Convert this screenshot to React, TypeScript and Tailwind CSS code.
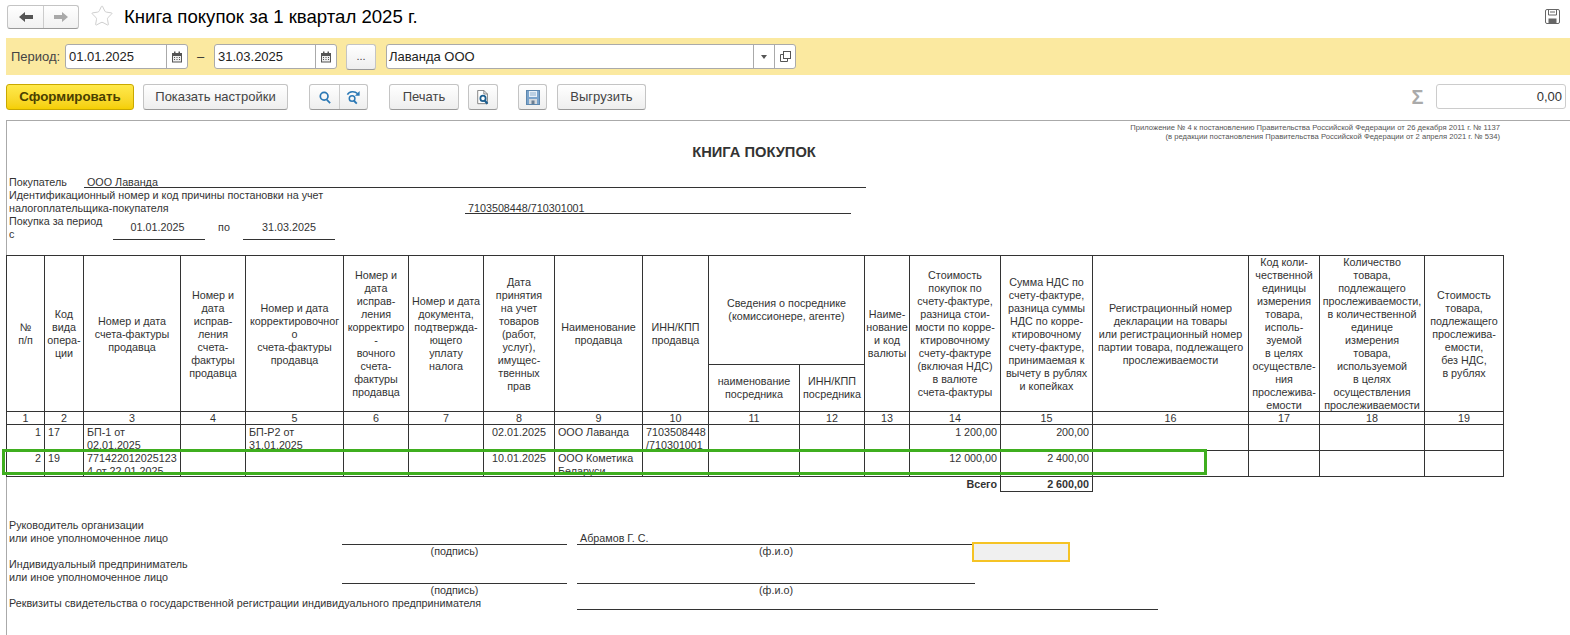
import type { ReactNode } from "react";
import { Star } from "lucide-react";

const colWidths = [38, 39, 97, 65, 98, 65, 75, 71, 88, 66, 91, 65, 45, 91, 92, 156, 71, 105, 79];

const rows = [
  ["1", "17", "БП-1 от\n02.01.2025", "", "БП-Р2 от\n31.01.2025", "", "", "02.01.2025", "ООО Лаванда", "7103508448\n/710301001", "", "", "", "1 200,00", "200,00", "", "", "", ""],
  ["2", "19", "771422012025123\n4 от 22.01.2025", "", "", "", "", "10.01.2025", "ООО Кометика\nБеларуси", "", "", "", "", "12 000,00", "2 400,00", "", "", "", ""],
];

const rightAligned = [0, 13, 14];
const centered = [7];

function Th({ lines, rowSpan, colSpan }: { lines: string[]; rowSpan?: number; colSpan?: number }) {
  return (
    <th rowSpan={rowSpan} colSpan={colSpan} className="overflow-hidden border border-[#333] p-0 text-center align-middle font-normal">
      <div className="mb-[-1px]">
        {lines.map((l, i) => (
          <div key={i} className="h-[13px] whitespace-nowrap">
            {l}
          </div>
        ))}
      </div>
    </th>
  );
}

function CalendarIcon() {
  return (
    <svg width="12" height="12" viewBox="0 0 12 12">
      <rect x="1" y="2" width="10" height="9.5" fill="#555" />
      <rect x="2" y="5" width="8" height="5.5" fill="#eee" />
      <rect x="3" y="0.5" width="1.5" height="2.5" fill="#555" />
      <rect x="7.5" y="0.5" width="1.5" height="2.5" fill="#555" />
      <path d="M3 6.5h1M5.5 6.5h1M8 6.5h1M3 8.5h1M5.5 8.5h1M8 8.5h1" stroke="#555" />
    </svg>
  );
}

function DateField({ value }: { value: string }) {
  return (
    <div className="flex h-[25px] w-[123px] items-center rounded-[3px] border border-[#aaa] bg-white">
      <span className="flex-1 pl-[3px] text-[13px] text-[#222]">{value}</span>
      <span className="flex h-full w-[21px] items-center justify-center border-l border-[#aaa]">
        <CalendarIcon />
      </span>
    </div>
  );
}

function Btn({ children, className }: { children: ReactNode; className: string }) {
  return (
    <div className={`flex h-[26px] items-center justify-center rounded-[3px] border border-[#c4c4c4] border-b-[#999] bg-gradient-to-b from-white to-[#eee] text-[13px] text-[#444] ${className}`}>
      {children}
    </div>
  );
}

function FloppyBlue() {
  return (
    <svg width="14" height="15" viewBox="0 0 14 15">
      <rect x="0.5" y="0.5" width="13" height="14" fill="#7ba4cc" stroke="#5c86ad" />
      <rect x="3" y="1" width="8" height="6" fill="#e8f0f7" />
      <path d="M4 3h6M4 5h6" stroke="#8fb0cf" />
      <rect x="3" y="9" width="8" height="5" fill="#d5d9dd" />
      <rect x="5.500" y="10.500" width="3" height="3.500" fill="#6b7f93" />
    </svg>
  );
}

export default function App() {
  return (
    <div className="h-[635px] w-[1570px] overflow-hidden bg-white font-['Liberation_Sans',sans-serif]">
      {/* шапка формы */}
      <div className="flex h-[38px] items-start pl-[7px] pt-[5px]">
        <div className="flex h-[24px] w-[72px] rounded-[3px] border border-[#c4c4c4] border-b-[#999] bg-gradient-to-b from-white to-[#f1f1f1]">
          <div className="flex w-[36px] items-center justify-center border-r border-[#ccc]">
            <svg width="14" height="10" viewBox="0 0 14 10">
              <path d="M0 5l6-5v3h8v4H6v3z" fill="#555" />
            </svg>
          </div>
          <div className="flex flex-1 items-center justify-center">
            <svg width="14" height="10" viewBox="0 0 14 10">
              <path d="M14 5L8 0v3H0v4h8v3z" fill="#a9a9a9" />
            </svg>
          </div>
        </div>
        <Star className="ml-[11px] mt-[-1px] text-[#cfcfcf]" size={24} strokeWidth={1} />
        <h1 className="ml-[10px] text-[18.6px] leading-[24px] text-black">Книга покупок за 1 квартал 2025 г.</h1>
        <div className="ml-auto mr-[10px] mt-[4px]">
          <svg width="15" height="15" viewBox="0 0 15 15" fill="none" stroke="#666">
            <rect x="0.5" y="0.5" width="14" height="14" rx="1.5" />
            <path d="M3.5 1v5h8V1M5 3h5" />
            <rect x="4" y="10" width="7" height="4.5" fill="#666" />
          </svg>
        </div>
      </div>

      {/* панель отбора */}
      <div className="ml-[6px] flex h-[37px] items-center bg-[#fbe9a0] pl-[5px] text-[13px] text-[#444]">
        <span className="w-[54px]">Период:</span>
        <DateField value="01.01.2025" />
        <span className="w-[26px] pl-[9px] text-[#333]">–</span>
        <DateField value="31.03.2025" />
        <div className="ml-[9px] flex h-[26px] w-[30px] items-center justify-center rounded-[3px] border border-[#c4c4c4] border-b-[#999] bg-gradient-to-b from-white to-[#eee] text-[11px] text-[#444]">...</div>
        <div className="ml-[10px] flex h-[25px] w-[410px] items-center rounded-[3px] border border-[#aaa] bg-white">
          <span className="flex-1 pl-[2px] text-[#222]">Лаванда ООО</span>
          <span className="flex h-full w-[21px] items-center justify-center border-l border-[#aaa]">
            <svg width="6" height="4" viewBox="0 0 6 4">
              <path d="M0 0h6L3 4z" fill="#555" />
            </svg>
          </span>
          <span className="flex h-full w-[21px] items-center justify-center border-l border-[#aaa]">
            <svg width="11" height="11" viewBox="0 0 11 11" fill="none" stroke="#555">
              <rect x="3.5" y="0.5" width="7" height="7" />
              <path d="M3 3.5H0.5v7h7V8" />
            </svg>
          </span>
        </div>
      </div>

      {/* командная панель */}
      <div className="flex h-[45px] items-start pl-[6px] pt-[9px]">
        <div className="flex h-[26px] w-[128px] items-center justify-center rounded-[3px] border border-[#c9a800] bg-gradient-to-b from-[#ffe94a] to-[#f5cf00] text-[13.3px] font-bold text-[#4a4000]">Сформировать</div>
        <Btn className="ml-[9px] w-[145px]">Показать настройки</Btn>
        <Btn className="ml-[21px] w-[59px] !justify-start">
          <span className="flex h-full w-[30px] items-center justify-center border-r border-[#ccc]">
            <svg width="12" height="13" viewBox="0 0 14 15" fill="none" stroke="#2b78b5" strokeWidth="2">
              <circle cx="6" cy="6" r="4.5" />
              <path d="M9 10l4 4" />
            </svg>
          </span>
          <span className="flex flex-1 items-center justify-center">
            <svg width="15" height="15" viewBox="0 0 15 16" fill="none" stroke="#2b78b5" strokeWidth="1.6">
              <path d="M1 5c2-4 8-4 11-1" />
              <path d="M14 1v5H9" fill="#2b78b5" stroke="none" />
              <circle cx="6" cy="9" r="3" />
              <path d="M8 11.500l3 3" strokeWidth="2" />
            </svg>
          </span>
        </Btn>
        <Btn className="ml-[21px] w-[70px]">Печать</Btn>
        <Btn className="ml-[9px] w-[30px]">
          <svg width="14" height="15" viewBox="0 0 15 17" fill="none">
            <path d="M1.500 0.500h7l4 4v11h-11z" stroke="#777" fill="#fff" />
            <path d="M8.500 0.500v4h4" stroke="#777" />
            <circle cx="7.500" cy="9.500" r="3" stroke="#1d5f8f" strokeWidth="2" />
            <path d="M9.500 12l3 3.500" stroke="#1d5f8f" strokeWidth="2.500" />
          </svg>
        </Btn>
        <Btn className="ml-[20px] w-[29px]">
          <FloppyBlue />
        </Btn>
        <Btn className="ml-[10px] w-[89px]">Выгрузить</Btn>
        <span className="ml-auto w-[21px] text-center text-[20px] font-bold leading-[26px] text-[#aaa]">Σ</span>
        <div className="ml-[8px] mr-[4px] flex h-[25px] w-[130px] items-center justify-end rounded-[3px] border border-[#ccc] pr-[3px] text-[13px] text-[#333]">0,00</div>
      </div>

      {/* табличный документ */}
      <div className="relative ml-[6px] h-[515px] border-l border-t border-[#aaa] text-[10.75px] leading-[13px] text-[#333]">
        <div className="w-[1493px] pt-[2px] text-right text-[7.64px] leading-[9px] text-[#555]">
          <div>Приложение № 4 к постановлению Правительства Российской Федерации от 26 декабря 2011 г. № 1137</div>
          <div>(в редакции постановления Правительства Российской Федерации от 2 апреля 2021 г. № 534)</div>
        </div>
        <div className="mt-[1px] h-[33px] w-[1494px] text-center text-[14.7px] font-bold leading-[20px] text-[#333]">КНИГА ПОКУПОК</div>

        <div className="flex h-[13px] pl-[2px] pt-[1px]">
          <span className="w-[75px]">Покупатель</span>
          <span className="w-[782px] border-b border-[#333] pl-[3px]">ООО Лаванда</span>
        </div>
        <div className="h-[13px] pl-[2px] pt-[1px]">Идентификационный номер и код причины постановки на учет</div>
        <div className="flex h-[13px] pl-[2px] pt-[1px]">
          <span className="w-[456px]">налогоплательщика-покупателя</span>
          <span className="w-[386px] border-b border-[#333] pl-[3px]">7103508448/710301001</span>
        </div>
        <div className="flex h-[26px] pl-[2px] pt-[1px]">
          <span className="w-[104px]">
            Покупка за период
            <br />с
          </span>
          <span className="flex w-[92px] items-center justify-center border-b border-[#333] pr-[3px]">01.01.2025</span>
          <span className="flex w-[38px] items-center justify-center">по</span>
          <span className="flex w-[92px] items-center justify-center border-b border-[#333]">31.03.2025</span>
        </div>

        <table className="ml-[-1px] mt-[15px] w-[1497px] table-fixed border-collapse">
          <colgroup>
            {colWidths.map((w, i) => (
              <col key={i} style={{ width: w }} />
            ))}
          </colgroup>
          <thead>
            <tr className="h-[108px]">
              <Th rowSpan={2} lines={["№", "п/п"]} />
              <Th rowSpan={2} lines={["Код", "вида", "опера-", "ции"]} />
              <Th rowSpan={2} lines={["Номер и дата", "счета-фактуры", "продавца"]} />
              <Th rowSpan={2} lines={["Номер и", "дата", "исправ-", "ления", "счета-", "фактуры", "продавца"]} />
              <Th rowSpan={2} lines={["Номер и дата", "корректировочног", "о", "счета-фактуры", "продавца"]} />
              <Th rowSpan={2} lines={["Номер и", "дата", "исправ-", "ления", "корректиро", "-", "вочного", "счета-", "фактуры", "продавца"]} />
              <Th rowSpan={2} lines={["Номер и дата", "документа,", "подтвержда-", "ющего", "уплату", "налога"]} />
              <Th rowSpan={2} lines={["Дата", "принятия", "на учет", "товаров", "(работ,", "услуг),", "имущес-", "твенных", "прав"]} />
              <Th rowSpan={2} lines={["Наименование", "продавца"]} />
              <Th rowSpan={2} lines={["ИНН/КПП", "продавца"]} />
              <Th colSpan={2} lines={["Сведения о посреднике", "(комиссионере, агенте)"]} />
              <Th rowSpan={2} lines={["Наиме-", "нование", "и код", "валюты"]} />
              <Th rowSpan={2} lines={["Стоимость", "покупок по", "счету-фактуре,", "разница стои-", "мости по корре-", "ктировочному", "счету-фактуре", "(включая НДС)", "в валюте", "счета-фактуры"]} />
              <Th rowSpan={2} lines={["Сумма НДС по", "счету-фактуре,", "разница суммы", "НДС по корре-", "ктировочному", "счету-фактуре,", "принимаемая к", "вычету в рублях", "и копейках"]} />
              <Th rowSpan={2} lines={["Регистрационный номер", "декларации на товары", "или регистрационный номер", "партии товара, подлежащего", "прослеживаемости"]} />
              <Th rowSpan={2} lines={["Код коли-", "чественной", "единицы", "измерения", "товара,", "исполь-", "зуемой", "в целях", "осуществле-", "ния", "прослежива-", "емости"]} />
              <Th rowSpan={2} lines={["Количество", "товара,", "подлежащего", "прослеживаемости,", "в количественной", "единице", "измерения", "товара,", "используемой", "в целях", "осуществления", "прослеживаемости"]} />
              <Th rowSpan={2} lines={["Стоимость", "товара,", "подлежащего", "прослежива-", "емости,", "без НДС,", "в рублях"]} />
            </tr>
            <tr className="h-[47px]">
              <Th lines={["наименование", "посредника"]} />
              <Th lines={["ИНН/КПП", "посредника"]} />
            </tr>
            <tr className="h-[13px]">
              {colWidths.map((_, i) => (
                <th key={i} className="border border-[#333] p-0 text-center font-normal leading-[12px]">
                  {i + 1}
                </th>
              ))}
            </tr>
          </thead>
          <tbody>
            {rows.map((row) => (
              <tr key={row[0]} className="h-[26px]">
                {row.map((cell, i) => (
                  <td key={i} className="border border-[#333] p-0 align-top">
                    <div className={`h-[25px] overflow-hidden whitespace-pre-line px-[3px] pt-[1px] ${rightAligned.includes(i) ? "text-right" : centered.includes(i) ? "text-center" : "text-left"}`}>
                      {cell}
                    </div>
                  </td>
                ))}
              </tr>
            ))}
            <tr className="h-[15px]">
              <td colSpan={14} className="p-0 pr-[3px] text-right font-bold leading-[14px]">
                Всего
              </td>
              <td className="border border-[#333] p-0 pr-[3px] text-right font-bold leading-[14px]">2 600,00</td>
            </tr>
          </tbody>
        </table>

        {/* подписи */}
        <div className="mt-[27px] pl-[2px]">
          <div className="h-[13px]">Руководитель организации</div>
          <div className="flex h-[13px]">
            <span className="w-[333px]">или иное уполномоченное лицо</span>
            <span className="w-[225px] border-b border-[#333]" />
            <span className="ml-[10px] w-[398px] border-b border-[#333] pl-[3px]">Абрамов Г. С.</span>
          </div>
          <div className="flex h-[13px]">
            <span className="ml-[333px] w-[225px] text-center">(подпись)</span>
            <span className="ml-[10px] w-[398px] text-center">(ф.и.о)</span>
            <span className="ml-[-3px] mt-[-3px] h-[20px] w-[98px] border-2 border-[#f5c325] bg-[#f0f0f0]" />
          </div>
          <div className="h-[13px]">Индивидуальный предприниматель</div>
          <div className="flex h-[13px]">
            <span className="w-[333px]">или иное уполномоченное лицо</span>
            <span className="w-[225px] border-b border-[#333]" />
            <span className="ml-[10px] w-[398px] border-b border-[#333]" />
          </div>
          <div className="flex h-[13px]">
            <span className="ml-[333px] w-[225px] text-center">(подпись)</span>
            <span className="ml-[10px] w-[398px] text-center">(ф.и.о)</span>
          </div>
          <div className="flex h-[13px]">
            <span className="w-[568px] whitespace-nowrap">Реквизиты свидетельства о государственной регистрации индивидуального предпринимателя</span>
            <span className="w-[581px] border-b border-[#333]" />
          </div>
        </div>

        {/* рамка выделения строки */}
        <div className="absolute left-[-5px] top-[328px] h-[26px] w-[1205px] border-[3px] border-[#3fae1f]" />
      </div>
    </div>
  );
}
